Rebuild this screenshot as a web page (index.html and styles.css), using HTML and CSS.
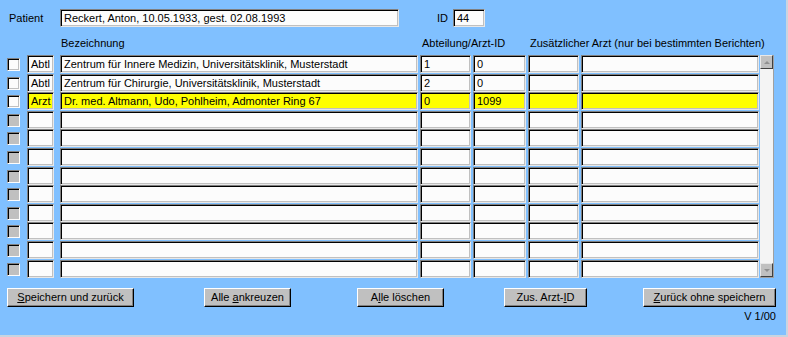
FILE: index.html
```html
<!DOCTYPE html>
<html lang="de">
<head>
<meta charset="utf-8">
<title>Berichtsempfänger</title>
<link rel="stylesheet" href="styles.css">
</head>
<body>
<div class="window">
  <div class="patient-row">
    <span class="lbl-patient">Patient</span>
    <div class="field f-patient">Reckert, Anton, 10.05.1933, gest. 02.08.1993</div>
    <span class="lbl-id">ID</span>
    <div class="field f-id">44</div>
  </div>

  <div class="head-row">
    <span class="h-bez">Bezeichnung</span>
    <span class="h-abt">Abteilung/Arzt-ID</span>
    <span class="h-zus">Zusätzlicher Arzt (nur bei bestimmten Berichten)</span>
  </div>

  <div class="table">
    <div class="rows">
      <div class="row">
        <span class="cb"></span>
        <div class="field c-type">Abtl</div>
        <div class="field c-bez">Zentrum für Innere Medizin, Universitätsklinik, Musterstadt</div>
        <div class="field c-abt">1</div>
        <div class="field c-arzt">0</div>
        <div class="field c-zus1"></div>
        <div class="field c-zus2"></div>
      </div>
      <div class="row">
        <span class="cb"></span>
        <div class="field c-type">Abtl</div>
        <div class="field c-bez">Zentrum für Chirurgie, Universitätsklinik, Musterstadt</div>
        <div class="field c-abt">2</div>
        <div class="field c-arzt">0</div>
        <div class="field c-zus1"></div>
        <div class="field c-zus2"></div>
      </div>
      <div class="row sel">
        <span class="cb"></span>
        <div class="field c-type">Arzt</div>
        <div class="field c-bez">Dr. med. Altmann, Udo, Pohlheim, Admonter Ring 67</div>
        <div class="field c-abt">0</div>
        <div class="field c-arzt">1099</div>
        <div class="field c-zus1"></div>
        <div class="field c-zus2"></div>
      </div>
      <div class="row"><span class="cb off"></span><div class="field c-type"></div><div class="field c-bez"></div><div class="field c-abt"></div><div class="field c-arzt"></div><div class="field c-zus1"></div><div class="field c-zus2"></div></div>
      <div class="row"><span class="cb off"></span><div class="field c-type"></div><div class="field c-bez"></div><div class="field c-abt"></div><div class="field c-arzt"></div><div class="field c-zus1"></div><div class="field c-zus2"></div></div>
      <div class="row"><span class="cb off"></span><div class="field c-type"></div><div class="field c-bez"></div><div class="field c-abt"></div><div class="field c-arzt"></div><div class="field c-zus1"></div><div class="field c-zus2"></div></div>
      <div class="row"><span class="cb off"></span><div class="field c-type"></div><div class="field c-bez"></div><div class="field c-abt"></div><div class="field c-arzt"></div><div class="field c-zus1"></div><div class="field c-zus2"></div></div>
      <div class="row"><span class="cb off"></span><div class="field c-type"></div><div class="field c-bez"></div><div class="field c-abt"></div><div class="field c-arzt"></div><div class="field c-zus1"></div><div class="field c-zus2"></div></div>
      <div class="row"><span class="cb off"></span><div class="field c-type"></div><div class="field c-bez"></div><div class="field c-abt"></div><div class="field c-arzt"></div><div class="field c-zus1"></div><div class="field c-zus2"></div></div>
      <div class="row"><span class="cb off"></span><div class="field c-type"></div><div class="field c-bez"></div><div class="field c-abt"></div><div class="field c-arzt"></div><div class="field c-zus1"></div><div class="field c-zus2"></div></div>
      <div class="row"><span class="cb off"></span><div class="field c-type"></div><div class="field c-bez"></div><div class="field c-abt"></div><div class="field c-arzt"></div><div class="field c-zus1"></div><div class="field c-zus2"></div></div>
      <div class="row"><span class="cb off"></span><div class="field c-type"></div><div class="field c-bez"></div><div class="field c-abt"></div><div class="field c-arzt"></div><div class="field c-zus1"></div><div class="field c-zus2"></div></div>
    </div>
    <div class="scrollbar">
      <div class="sb-btn"><span class="arrow up"></span></div>
      <div class="sb-track"></div>
      <div class="sb-btn"><span class="arrow down"></span></div>
    </div>
  </div>

  <div class="btn-row">
    <button class="btn b-save"><u>S</u>peichern und zurück</button>
    <button class="btn b-all">Alle <u>a</u>nkreuzen</button>
    <button class="btn b-del">A<u>l</u>le löschen</button>
    <button class="btn b-zus">Zus. Arzt-<u>I</u>D</button>
    <button class="btn b-back"><u>Z</u>urück ohne speichern</button>
  </div>
  <div class="version">V 1/00</div>
</div>
</body>
</html>
```

FILE: styles.css
```css
* { box-sizing: border-box; }

html, body {
  margin: 0;
  padding: 0;
  background: #80c0ff;
}

body {
  font-family: "Liberation Sans", Arial, sans-serif;
  font-size: 11px;
  color: #000;
}

.window {
  width: 788px;
  height: 337px;
  background: #80c0ff;
  border-right: 2px solid #c8d4e0;
  border-bottom: 2px solid #c8d4e0;
  display: flex;
  flex-direction: column;
}

/* generic sunken field */
.field {
  background: #fcfcfc;
  border: 1px solid;
  border-color: #808080 #e8e8e8 #e8e8e8 #808080;
  box-shadow: inset 1px 1px 0 #000, inset -1px -1px 0 #c0c0c0;
  padding: 0 0 0 3px;
  height: 18px;
  line-height: 16px;
  white-space: nowrap;
  overflow: hidden;
}

.patient-row {
  display: flex;
  align-items: center;
  margin-top: 9px;
  height: 18px;
}
.lbl-patient { margin-left: 9px; width: 51px; }
.f-patient { width: 339px; }
.lbl-id { margin-left: 38px; width: 16px; }
.f-id { width: 32px; }

.head-row {
  display: flex;
  margin-top: 10px;
  height: 17px;
  line-height: 13px;
}
.h-bez { margin-left: 61px; width: 361px; }
.h-abt { width: 108px; }
.h-zus { white-space: nowrap; }

.table {
  display: flex;
  margin-top: 1px;
}

.rows {
  display: flex;
  flex-direction: column;
}

.row {
  display: flex;
  align-items: flex-start;
  height: 18.6px;
}

.row .field { height: 18px; }

.cb {
  margin-left: 7px;
  margin-top: 3px;
  width: 13px;
  height: 13px;
  background: #fcfcfc;
  border: 1px solid;
  border-color: #808080 #fcfcfc #fcfcfc #808080;
  box-shadow: inset 1px 1px 0 #000, inset -1px -1px 0 #c0c0c0;
}
.cb.off { background: #c0c0c0; }

.c-type { margin-left: 7px; width: 27px; }
.c-bez  { margin-left: 6px; width: 358px; }
.c-abt  { margin-left: 2px; width: 51px; }
.c-arzt { margin-left: 2px; width: 53px; }
.c-zus1 { margin-left: 2px; width: 51px; }
.c-zus2 { margin-left: 2px; width: 178px; }

.row.sel .field { background: #ffff00; }

.scrollbar {
  margin-left: 1px;
  width: 14px;
  height: 223px;
  display: flex;
  flex-direction: column;
  background: #f4f4f4;
  border-right: 1px solid #a0a0a0;
  border-bottom: 1px solid #a0a0a0;
}
.sb-btn {
  height: 14px;
  background: #c0c0c0;
  border: 1px solid;
  border-color: #e8e8e8 #404040 #404040 #e8e8e8;
  display: flex;
  align-items: center;
  justify-content: center;
}
.sb-track { flex: 1; }
.arrow {
  width: 0;
  height: 0;
  border-left: 3px solid transparent;
  border-right: 3px solid transparent;
}
.arrow.up { border-bottom: 3px solid #909090; }
.arrow.down { border-top: 3px solid #909090; }

.btn-row {
  display: flex;
  margin-top: 10px;
  height: 19px;
}
.btn {
  font-family: "Liberation Sans", Arial, sans-serif;
  font-size: 11px;
  color: #000;
  height: 19px;
  padding: 0;
  background: #c0c0c0;
  border: 1px solid;
  border-color: #ffffff #000 #000 #ffffff;
  box-shadow: inset -1px -1px 0 #808080;
  border-radius: 0;
  line-height: 15px;
}
.btn u { text-decoration: underline; }
.b-save { margin-left: 7px; width: 127px; }
.b-all  { margin-left: 70px; width: 87px; }
.b-del  { margin-left: 66px; width: 87px; }
.b-zus  { margin-left: 60px; width: 83px; }
.b-back { margin-left: 56px; width: 133px; }

.version {
  margin-top: 3px;
  width: 776px;
  text-align: right;
  line-height: 13px;
}
```
